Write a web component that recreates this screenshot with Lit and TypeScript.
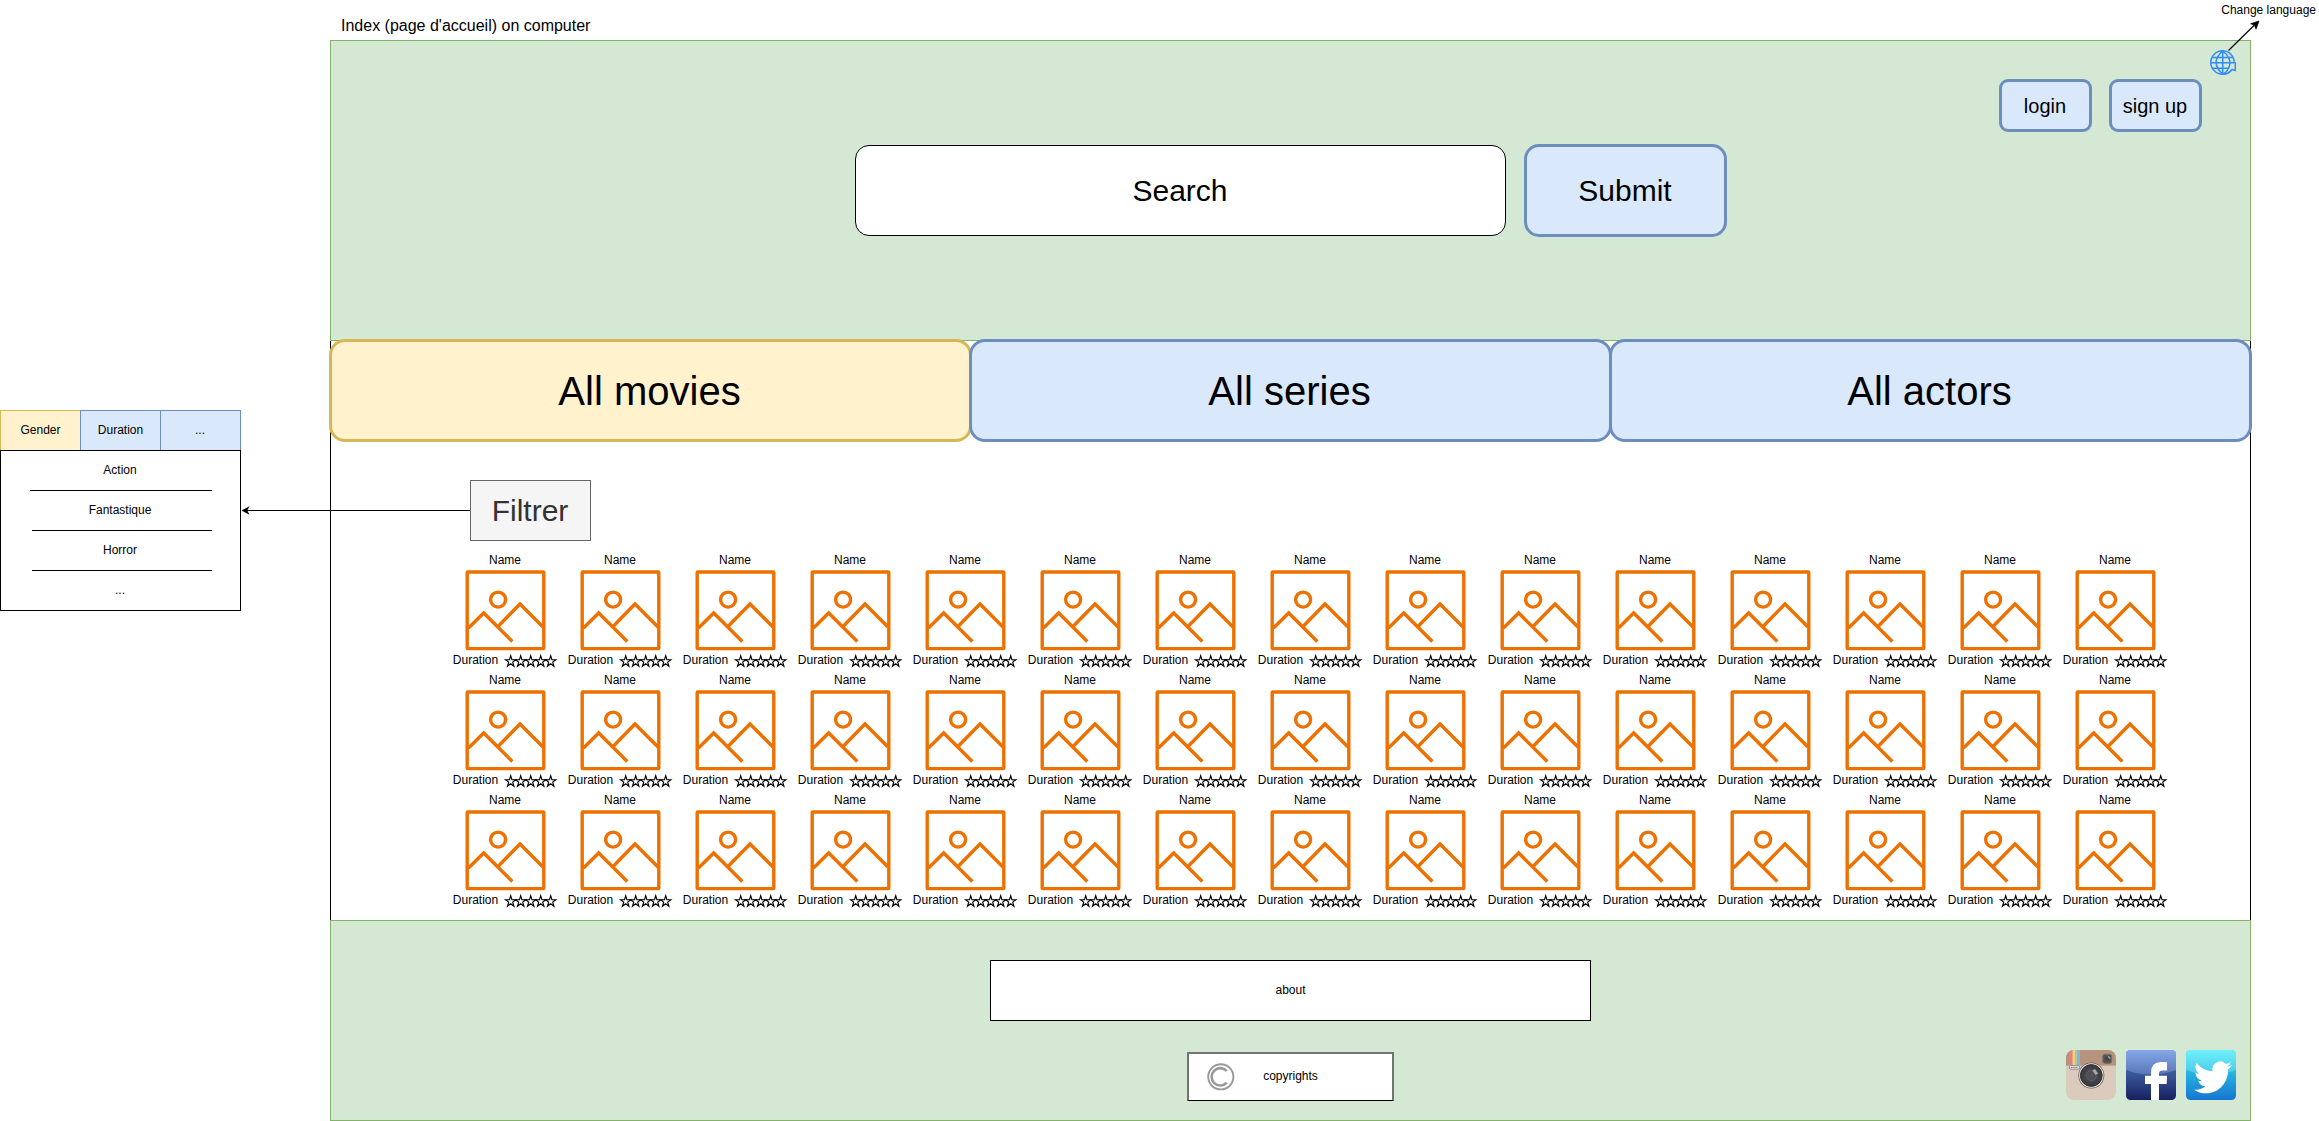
import { LitElement, html, css, svg } from "lit";
import { customElement } from "lit/decorators.js";

const ROWS = [0, 1, 2];
const COLUMNS = Array.from({ length: 15 }, (_, i) => i);
const STARS = [0, 1, 2, 3, 4];

@customElement("star-rating")
class StarRating extends LitElement {
  static styles = css`
    :host { display: block; width: 54px; height: 13px; }
    svg { display: block; overflow: visible; }
  `;
  render() {
    return html`<svg width="54" height="13" fill="none" stroke="#000" stroke-width="1.150">
      ${STARS.map((i) => svg`<path transform="translate(${i * 10 + 0.5} 0.7)"
        d="M0 4H4L5.2 0L6.4 4H10.4L7.2 6.4L8.4 10.5L5.2 8L2 10.5L3.2 6.4Z"/>`)}
    </svg>`;
  }
}

@customElement("movie-card")
class MovieCard extends LitElement {
  static styles = css`
    :host { display: flex; flex-direction: column; width: 115px; height: 120px; font-size: 12px; }
    .name { height: 20px; line-height: 20px; width: 80px; margin-left: 18px; text-align: center; }
    .picture { display: block; width: 80px; height: 80px; margin-left: 18px; overflow: visible; }
    .meta { display: flex; height: 20px; line-height: 20px; }
    .duration { width: 58px; padding-right: 1px; box-sizing: border-box; text-align: center; }
    star-rating { margin-top: 5px; }
  `;
  render() {
    return html`
      <div class="name">Name</div>
      <svg class="picture" viewBox="0 0 80 80" fill="none" stroke="#ed7100" stroke-width="3.400">
        <rect x="2.200" y="2" width="76.600" height="76.600" rx=".5"/>
        <circle cx="33.100" cy="29.600" r="7.500"/>
        <path d="M3.500 58L18.700 43L47.300 71.500M33 56.500L55 34L78 57"/>
      </svg>
      <div class="meta"><span class="duration">Duration</span><star-rating></star-rating></div>
    `;
  }
}

@customElement("social-icons")
class SocialIcons extends LitElement {
  static styles = css`
    :host { display: flex; gap: 10px; }
    svg { display: block; }
  `;
  render() {
    return html`
      <svg width="50" height="50" viewBox="0 0 50 50">
        <defs>
          <clipPath id="ig"><rect width="50" height="50" rx="8"/></clipPath>
          <radialGradient id="lens"><stop offset="0" stop-color="#55555a"/><stop offset="1" stop-color="#38383f"/></radialGradient>
        </defs>
        <g clip-path="url(#ig)">
          <rect width="50" height="50" fill="#dacbbc"/>
          <rect width="50" height="15.600" fill="#b5937c"/>
          <rect x="3.500" width="3" height="15.600" fill="#f27c83"/>
          <rect x="6.500" width="2.500" height="15.600" fill="#f7ce7c"/>
          <rect x="9" width="2.500" height="15.600" fill="#a3cf95"/>
          <rect x="11.500" width="2.500" height="15.600" fill="#8cb1dc"/>
        </g>
        <rect x="3.500" y="15.500" width="10" height="3.800" rx="1.200" fill="#ddd" stroke="#88827d" stroke-width=".8"/>
        <path d="M5 17.500H12" stroke="#777" stroke-width="1.200" stroke-dasharray="1.500 .7"/>
        <rect x="36.800" y="4.300" width="8.900" height="9" rx="2" fill="#55504e" stroke="#77706b"/>
        <circle cx="41.200" cy="8.800" r="3.300" fill="#45454b" stroke="#66666b" stroke-width=".7"/>
        <path d="M42 6.500l2.200 2" stroke="#aaa" stroke-width="1.300"/>
        <circle cx="25.300" cy="25.500" r="13" fill="#695f58"/>
        <circle cx="25.300" cy="25.500" r="12.200" fill="#eee9e2"/>
        <circle cx="25.300" cy="25.500" r="10.900" fill="url(#lens)" stroke="#303035"/>
        <circle cx="25.300" cy="25.500" r="5" fill="none" stroke="#68686c" stroke-width=".7"/>
        <path d="M26.500 20.500l2.500-1.500 3 4.500-2.500 1.500z" fill="#aaaaae"/>
      </svg>
      <svg width="50" height="50" viewBox="0 0 50 50">
        <defs>
          <linearGradient id="fb" x2="0" y2="1"><stop offset="0" stop-color="#5b7fc8"/><stop offset=".5" stop-color="#375599"/><stop offset="1" stop-color="#17205f"/></linearGradient>
          <linearGradient id="fbs" x2="0" y2="1"><stop offset="0" stop-color="#86a7e8"/><stop offset="1" stop-color="#5877b6"/></linearGradient>
          <clipPath id="fc"><rect width="50" height="50" rx="4.500"/></clipPath>
        </defs>
        <g clip-path="url(#fc)">
          <rect width="50" height="50" fill="url(#fb)"/>
          <path d="M0 0H50V20Q25 29 0 20Z" fill="url(#fbs)"/>
          <path d="M25 50V34H19V25.800H25V22.500Q25 12 35 12H41V20.500H36.500Q33 20.500 33 23.500V25.800H41L40.700 34H33V50Z" fill="#fff"/>
        </g>
      </svg>
      <svg width="50" height="50" viewBox="0 0 50 50">
        <defs>
          <linearGradient id="tw" x2="0" y2="1"><stop offset="0" stop-color="#4bdcf4"/><stop offset=".5" stop-color="#26aee0"/><stop offset="1" stop-color="#1676d0"/></linearGradient>
          <linearGradient id="tws" x2="0" y2="1"><stop offset="0" stop-color="#6ef2fb"/><stop offset="1" stop-color="#4cc7e9"/></linearGradient>
          <clipPath id="tc"><rect width="50" height="50" rx="4.500"/></clipPath>
        </defs>
        <g clip-path="url(#tc)">
          <rect width="50" height="50" fill="url(#tw)"/>
          <path d="M0 0H50V20Q25 29 0 20Z" fill="url(#tws)"/>
        </g>
        <path transform="translate(8 7.800) scale(1.580 1.630)" fill="#fff" d="M23.950 4.570a10 10 0 0 1-2.820.77 4.960 4.960 0 0 0 2.160-2.720c-.95.55-2 .95-3.130 1.180a4.920 4.920 0 0 0-8.380 4.480C7.690 8.100 4.070 6.130 1.640 3.160a4.820 4.820 0 0 0-.67 2.480c0 1.710.87 3.210 2.190 4.100a4.900 4.900 0 0 1-2.230-.62v.06a4.920 4.920 0 0 0 3.950 4.830 5 5 0 0 1-2.210.08 4.940 4.940 0 0 0 4.600 3.420A9.870 9.870 0 0 1 0 19.540a13.990 13.990 0 0 0 7.550 2.210c9.050 0 14-7.500 14-13.980 0-.21 0-.42-.02-.63a9.940 9.940 0 0 0 2.460-2.550z"/>
      </svg>
    `;
  }
}

@customElement("filter-panel")
class FilterPanel extends LitElement {
  static styles = css`
    :host { display: block; width: 241px; font-size: 12px; }
    .heads { display: flex; height: 40px; }
    .head { box-sizing: border-box; width: 70px; flex: 1; border: 1px solid #6c8ebf; border-right: 0; border-bottom: 0; background: #dae8fc; text-align: center; line-height: 39px; }
    .head.on { background: #fff2cc; border-color: #d6b656; }
    .head.last { flex: none; width: 81px; padding-right: 1px; border-right: 1px solid #6c8ebf; }
    .list { box-sizing: border-box; width: 241px; height: 161px; border: 1px solid #000; background: #fff; display: flex; flex-direction: column; }
    .item { height: 39px; line-height: 39px; padding-right: 1px; text-align: center; }
    .rule { height: 1px; background: #000; margin: 0 28px 0 31px; }
    .rule.first { margin-left: 29px; }
  `;
  render() {
    return html`
      <div class="heads">
        <div class="head on">Gender</div><div class="head">Duration</div><div class="head last">...</div>
      </div>
      <div class="list">
        <div class="item">Action</div><div class="rule first"></div>
        <div class="item">Fantastique</div><div class="rule"></div>
        <div class="item">Horror</div><div class="rule"></div>
        <div class="item">...</div>
      </div>
    `;
  }
}

@customElement("app-root")
class AppRoot extends LitElement {
  static styles = css`
    :host { display: block; position: relative; width: 2319px; height: 1121px; overflow: hidden; background: #fff; color: #000; font-family: "Liberation Sans", Arial, sans-serif; font-size: 12px; }
    * { box-sizing: border-box; }
    .title { height: 40px; padding: 16px 0 0 341px; font-size: 16px; line-height: 20px; }
    .page { width: 1921px; height: 1081px; margin-left: 330px; display: flex; flex-direction: column; }
    header { height: 301px; background: #d5e8d4; border: 1px solid #82b366; display: flex; flex-direction: column; }
    .account { display: flex; justify-content: flex-end; gap: 17px; padding: 38px 48px 0 0; }
    .btn { display: flex; align-items: center; justify-content: center; background: #dae8fc; border: 3px solid #6c8ebf; }
    .small { width: 93px; height: 53px; padding: 1px 1px 0 0; border-radius: 9px; font-size: 20px; }
    .search { display: flex; gap: 18px; padding: 12px 0 0 524px; }
    .field { display: flex; align-items: center; justify-content: center; width: 651px; height: 91px; margin-top: 1px; padding-right: 1px; background: #fff; border: 1px solid #000; border-radius: 14px; font-size: 30px; }
    .submit { width: 203px; height: 93px; padding-right: 1px; border-radius: 15px; font-size: 30px; }
    .tabs { position: relative; z-index: 1; display: flex; margin: -2px -1px 0; height: 103px; }
    .tab { width: 643px; margin-right: -3px; padding: 2px 2px 0 0; flex: none; border-radius: 16px; font-size: 40px; }
    .tab.on { background: #fff2cc; border-color: #d6b656; }
    .body { flex: 1; display: flex; flex-direction: column; border: solid #000; border-width: 0 1px; margin-top: -101px; padding-top: 139px; }
    .filter { display: flex; align-items: center; justify-content: center; width: 121px; height: 61px; margin-left: 139px; padding-right: 1px; background: #f5f5f5; border: 1px solid #666; color: #333; font-size: 30px; }
    .grid { display: grid; grid-template-columns: repeat(15, 115px); grid-auto-rows: 120px; margin: 9px 0 -1px 116px; }
    footer { flex: none; height: 201px; background: #d5e8d4; border: 1px solid #82b366; display: flex; flex-direction: column; align-items: center; }
    .about { width: 601px; height: 61px; margin-top: 39px; background: #fff; border: 1px solid #000; text-align: center; line-height: 58px; }
    .bottom { width: 100%; display: flex; justify-content: space-between; margin-top: 28px; }
    .copy { position: relative; width: 207px; height: 49px; margin: 3px 0 0 856px; background: #fff; border: 2px solid #707571; border-bottom: 1px solid #000; text-align: center; line-height: 44px; }
    .copy svg { position: absolute; left: 17.5px; top: 8.7px; }
    social-icons { margin: 1px 14px 0 0; }
    .note { position: absolute; right: 3px; top: 2px; line-height: 16px; }
    filter-panel { position: absolute; left: 0; top: 410px; }
    .lines { position: absolute; left: 0; top: 0; pointer-events: none; z-index: 2; }
  `;
  render() {
    return html`
      <div class="title">Index (page d'accueil) on computer</div>
      <div class="page">
        <header>
          <div class="account"><div class="btn small">login</div><div class="btn small">sign up</div></div>
          <div class="search"><div class="field">Search</div><div class="btn submit">Submit</div></div>
        </header>
        <div class="tabs">
          <div class="btn tab on">All movies</div><div class="btn tab">All series</div><div class="btn tab">All actors</div>
        </div>
        <div class="body">
          <div class="filter">Filtrer</div>
          <div class="grid">${ROWS.map(() => COLUMNS.map(() => html`<movie-card></movie-card>`))}</div>
        </div>
        <footer>
          <div class="about">about</div>
          <div class="bottom">
            <div class="copy">
              <svg width="28" height="28" fill="none" stroke="#999">
                <circle cx="13.800" cy="13.800" r="12.600" stroke-width="1.900"/>
                <path d="M19.800 8A8.700 8.700 0 1 0 19.800 19.700" stroke-width="2.600"/>
              </svg>
              copyrights
            </div>
            <social-icons></social-icons>
          </div>
        </footer>
      </div>
      <filter-panel></filter-panel>
      <div class="note">Change language</div>
      <svg class="lines" width="2319" height="1121" fill="none">
        <path d="M470 510.500H247" stroke="#000"/>
        <path d="M241.500 510.500L249.500 506.200L247.300 510.500L249.500 514.800Z" fill="#000"/>
        <path d="M2228.500 50.500L2254.500 25" stroke="#000" stroke-width="1.200"/>
        <path d="M2259 21L2256 29.200L2254.500 25.300L2250.700 23.700Z" fill="#000" stroke="#000" stroke-width=".7"/>
        <g stroke="#2f8df5" stroke-width="1.500">
          <path d="M2222.500 74.200A11.700 11.700 0 1 1 2234.200 62.500"/>
          <path d="M2222.700 51V74.500M2212.500 57.500H2233M2211 62.700H2234.500M2212.500 68.200H2229"/>
          <path d="M2222.700 51Q2209.500 62.500 2222.700 74.300M2222.700 51Q2232 58 2229.500 66Q2227 72.500 2222.700 74.300"/>
          <path d="M2222.700 74.300Q2229 74 2232 69.500L2235.300 70.500V62"/>
        </g>
      </svg>
    `;
  }
}
